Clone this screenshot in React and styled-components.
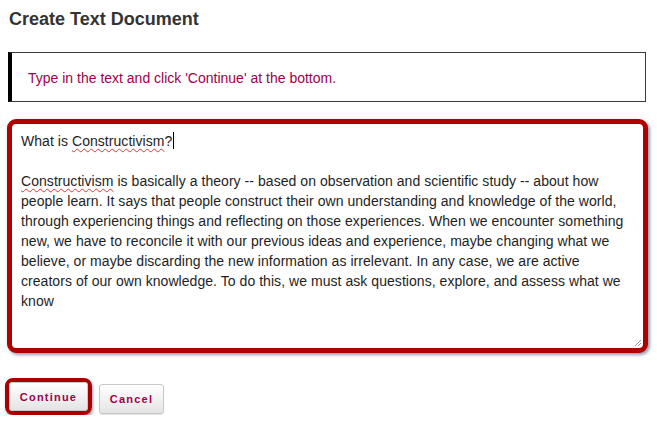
import React from "react";
import styled, { createGlobalStyle } from "styled-components";

const Global = createGlobalStyle`
  html, body { margin: 0; padding: 0; background: #fff; }
  body { font-family: "Liberation Sans", Arial, sans-serif; }
`;

const Page = styled.div`
  padding: 9px 9px 0 8px;
  width: 640px;
`;

const Title = styled.h2`
  margin: 0 0 0 1px;
  font-size: 18px;
  line-height: 21px;
  font-weight: bold;
  color: #333;
`;

const Notice = styled.div`
  margin-top: 22px;
  height: 50px;
  box-sizing: border-box;
  width: 638px;
  border: 1px solid #3a3a3a;
  border-left: 4px solid #000;
  display: flex;
  align-items: center;
  padding: 1px 0 0 16px;
  font-size: 14px;
  color: #a1004a;
`;

const EditorFrame = styled.div`
  position: relative;
  margin: 17px 0 0 -1px;
  width: 641px;
  height: 234px;
  box-sizing: border-box;
  border: 5px solid #b00000;
  border-radius: 9px;
  background: #fff;
  box-shadow: 2px 2px 3px rgba(40, 60, 90, 0.45), 0 0 6px rgba(150, 190, 230, 0.25);
  padding: 7px 9px;
`;

const EditorText = styled.div`
  font-size: 14px;
  line-height: 20px;
  letter-spacing: 0.05px;
  color: #1e1e1e;
  white-space: pre;
`;

const Misspelled = styled.span`
  text-decoration: underline wavy #d83a3a;
  text-decoration-thickness: 1px;
  text-underline-offset: 2px;
`;

const Caret = styled.span`
  display: inline-block;
  width: 1px;
  height: 17px;
  background: #000;
  vertical-align: -3px;
  margin-left: 1px;
`;

const Grip = styled.svg`
  position: absolute;
  right: 1px;
  bottom: 1px;
`;

const Actions = styled.div`
  display: flex;
  align-items: flex-start;
  margin: 25px 0 0 -3px;
`;

const Highlight = styled.div`
  border: 4px solid #ab0000;
  border-radius: 8px;
  box-shadow: 1px 2px 3px rgba(40, 40, 60, 0.45);
  display: flex;
`;

const Button = styled.button`
  font-family: "Liberation Sans", Arial, sans-serif;
  font-size: 11px;
  font-weight: bold;
  letter-spacing: 1.2px;
  color: #a1004a;
  height: ${(p) => p.$h}px;
  width: ${(p) => p.$w}px;
  padding: 0;
  margin: ${(p) => p.$m || 0};
  border: 1px solid #c8c8c8;
  border-radius: 3px;
  background: linear-gradient(#ffffff, #e4e4e4);
  box-shadow: 0 1px 1px rgba(0, 0, 0, 0.12);
  cursor: pointer;
`;

const lines = [
  "Constructivism is basically a theory -- based on observation and scientific study -- about how",
  "people learn. It says that people construct their own understanding and knowledge of the world,",
  "through experiencing things and reflecting on those experiences. When we encounter something",
  "new, we have to reconcile it with our previous ideas and experience, maybe changing what we",
  "believe, or maybe discarding the new information as irrelevant. In any case, we are active",
  "creators of our own knowledge. To do this, we must ask questions, explore, and assess what we",
  "know",
];

export default function App() {
  return (
    <>
      <Global />
      <Page>
        <Title>Create Text Document</Title>
        <Notice>Type in the text and click 'Continue' at the bottom.</Notice>
        <EditorFrame>
          <EditorText>
            What is <Misspelled>Constructivism</Misspelled>?<Caret />
            {"\n\n"}
            <Misspelled>Constructivism</Misspelled>
            {lines[0].slice("Constructivism".length)}
            {"\n"}
            {lines.slice(1).join("\n")}
          </EditorText>
          <Grip width="10" height="10" viewBox="0 0 10 10">
            <path d="M9 3 L3 9 M9 6 L6 9" stroke="#9a9a9a" strokeWidth="1" />
          </Grip>
        </EditorFrame>
        <Actions>
          <Highlight>
            <Button $w={79} $h={29}>Continue</Button>
          </Highlight>
          <Button $w={65} $h={30} $m="6px 0 0 7px">Cancel</Button>
        </Actions>
      </Page>
    </>
  );
}
